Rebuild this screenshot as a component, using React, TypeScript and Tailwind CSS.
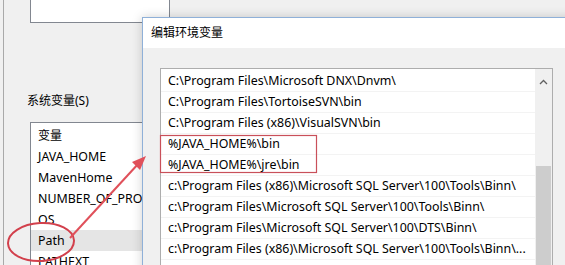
import React from "react";

const font = { fontFamily: '"Noto Sans", "Noto Sans CJK SC", sans-serif' };

const leftRows = ["JAVA_HOME", "MavenHome", "NUMBER_OF_PROCESSORS", "OS", "Path", "PATHEXT"];

const paths = [
  "C:\\Program Files\\Microsoft DNX\\Dnvm\\",
  "C:\\Program Files\\TortoiseSVN\\bin",
  "C:\\Program Files (x86)\\VisualSVN\\bin",
  "%JAVA_HOME%\\bin",
  "%JAVA_HOME%\\jre\\bin",
  "c:\\Program Files (x86)\\Microsoft SQL Server\\100\\Tools\\Binn\\",
  "c:\\Program Files\\Microsoft SQL Server\\100\\Tools\\Binn\\",
  "c:\\Program Files\\Microsoft SQL Server\\100\\DTS\\Binn\\",
  "c:\\Program Files (x86)\\Microsoft SQL Server\\100\\Tools\\Binn\\...",
];

export default function App() {
  return (
    <div
      className="relative w-[565px] h-[265px] overflow-hidden bg-[#f0f0f0] text-[12px] text-black"
      style={font}
    >
      {/* Background window */}
      <div className="flex h-full">
        <div className="w-[3px] shrink-0" />
        <div className="w-px shrink-0 bg-[#a9a9a9]" />
        <div className="flex flex-col flex-1 pl-[13px]">
          <div className="pl-[13px]">
            <div className="w-[140px] h-[23px] bg-white border-r border-b border-l border-[#828790]" />
          </div>
          <div className="mt-[61px] h-px bg-[#dcdcdc]" />
          <div className="pl-[10px] mt-[9px] h-[16px] leading-[16px]">系统变量(S)</div>
          <div className="pl-[13px] mt-[13px]">
            <div className="w-[140px] h-[200px] bg-white border-l border-t border-[#828790]">
              <div className="h-[23px] pt-[3px] leading-[20px] pl-[7px] whitespace-nowrap">变量</div>
              {leftRows.map((r) => (
                <div
                  key={r}
                  className={`h-[21px] leading-[21px] pl-[7px] whitespace-nowrap overflow-hidden text-[12.4px] ${
                    r === "Path" ? "bg-[#e5e5e5]" : ""
                  }`}
                >
                  {r}
                </div>
              ))}
            </div>
          </div>
        </div>
      </div>

      {/* Dialog window */}
      <div className="absolute left-[142px] top-[17px] w-[440px] h-[270px] border border-[#8fb0d8] bg-[#f0f0f0] shadow-[0_0_10px_rgba(0,0,0,0.18)] flex flex-col">
        <div className="h-[31px] bg-white pl-[8px] leading-[30px] text-[12px]">编辑环境变量</div>
        <div className="pt-[20px] pl-[17px]">
          <div className="w-[393px] h-[220px] bg-white border border-[#adadad] flex">
            <div className="flex-1 min-w-0 pt-[2px]">
              {paths.map((p, i) => (
                <div
                  key={i}
                  className="h-[21px] leading-[20px] pl-[7px] whitespace-nowrap border-b border-[#f3f3f3] text-[12.4px]"
                >
                  {p}
                </div>
              ))}
            </div>
            <div className="w-[17px] shrink-0 bg-[#f0f0f0] flex flex-col items-center">
              <div className="h-[17px] w-full flex items-center justify-center mt-[4px]">
                <svg width="9" height="6" viewBox="0 0 9 6">
                  <path d="M1 5 L4.5 1.5 L8 5" fill="none" stroke="#606060" strokeWidth="1.3" />
                </svg>
              </div>
              <div className="mt-[76px] w-[15px] flex-1 bg-[#cdcdcd]" />
            </div>
          </div>
        </div>
      </div>

      {/* Annotations */}
      <svg className="absolute left-0 top-0 pointer-events-none" width="565" height="265">
        <rect x="160.5" y="135.5" width="156" height="37" fill="none" stroke="#c9505a" strokeWidth="1.2" />
        <ellipse cx="41" cy="242" rx="33" ry="19" fill="none" stroke="#d2404c" strokeWidth="2" transform="rotate(-3 41 242)" />
        <line x1="70" y1="238" x2="139" y2="163" stroke="#e0505a" strokeWidth="2" />
        <polygon points="146,156 132,162 140,170" fill="#e0505a" />
      </svg>
    </div>
  );
}
